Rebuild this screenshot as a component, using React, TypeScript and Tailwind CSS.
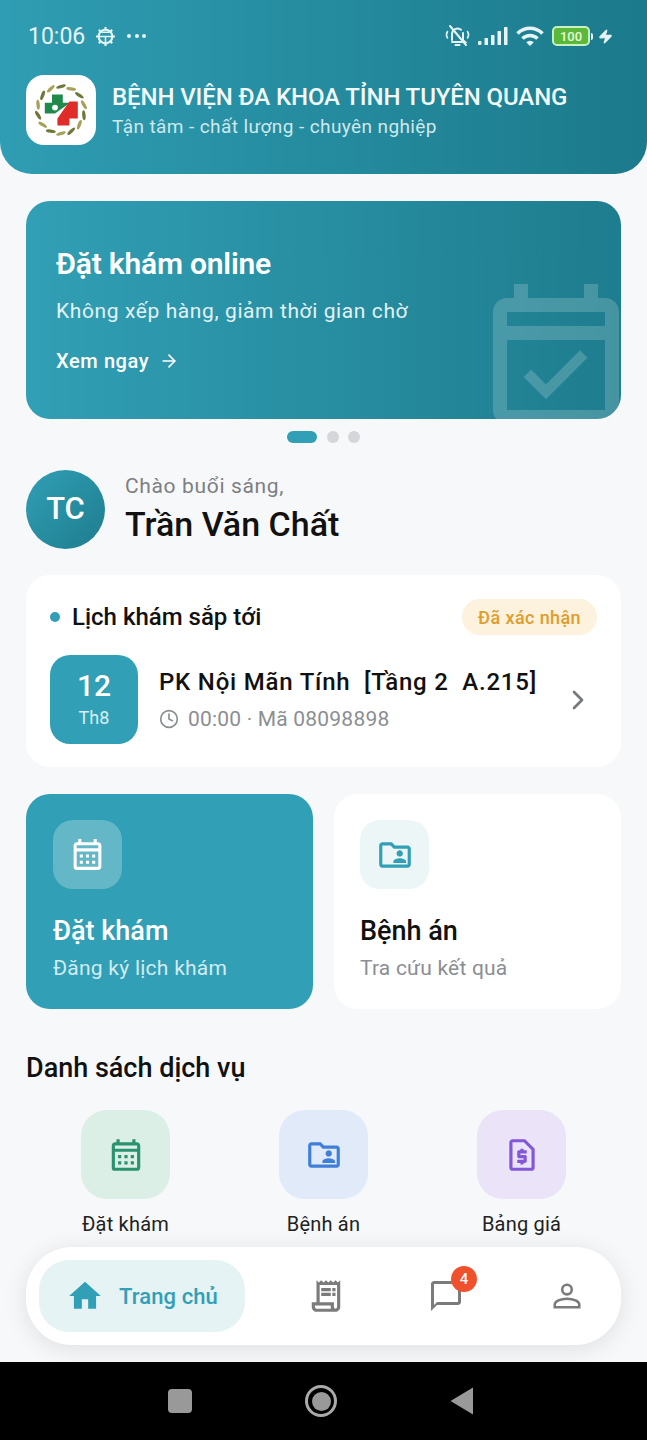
import React from "react";
import { ArrowRight, ChevronRight, Clock, Zap } from "lucide-react";
import {
  MdHome,
  MdOutlineCalendarMonth,
  MdOutlineChatBubbleOutline,
  MdOutlineEventAvailable,
  MdOutlineFolderShared,
  MdOutlineReceiptLong,
  MdOutlineRequestPage,
  MdWifi,
} from "react-icons/md";

const services = [
  { label: "Đặt khám", box: "bg-[#dcefe7]", icon: <MdOutlineCalendarMonth className="text-[38px] text-[#2b9270]" /> },
  { label: "Bệnh án", box: "bg-[#e0eaf9]", icon: <MdOutlineFolderShared className="text-[38px] text-[#3f7fd8]" /> },
  { label: "Bảng giá", box: "bg-[#ebe4f9]", icon: <MdOutlineRequestPage className="text-[38px] text-[#8257d8]" /> },
];

function Gear() {
  return (
    <svg width="21" height="21" viewBox="0 0 20 20" fill="none" stroke="#e6f4f6" strokeWidth="2">
      <circle cx="10" cy="10" r="6.500" />
      <path d="M3.500 10h13M10 10v6.500M6 6l8 0" strokeWidth="1.500" />
      <path d="M10 1v2.500M10 16.500v2.500M1 10h2.500M16.500 10h2.500M3.600 3.600l1.800 1.800M14.600 14.600l1.800 1.800M16.400 3.600l-1.800 1.800M5.400 14.600l-1.800 1.800" />
    </svg>
  );
}

function MutedBell() {
  return (
    <svg width="27" height="26" viewBox="0 0 27 26" fill="none" stroke="#e6f4f6" strokeWidth="2" strokeLinecap="round">
      <path d="M8 17V11a5.500 5.500 0 0 1 9-4.200M19 10v7l2 2H8" />
      <path d="M11.500 22h4" />
      <path d="M6 3l16 19" />
      <path d="M3.500 8.500c-1.300 2-1.300 4.500 0 6.500M23.500 8.500c1.300 2 1.300 4.500 0 6.500" strokeWidth="1.600" />
    </svg>
  );
}

function Signal() {
  return (
    <svg width="30" height="18" viewBox="0 0 30 18" fill="#e6f4f6">
      <rect x="0" y="14" width="3.500" height="4" rx="1" />
      <rect x="6.500" y="11" width="3.500" height="7" rx="0.500" />
      <rect x="13" y="8" width="3.500" height="10" rx="0.500" />
      <rect x="19.500" y="4" width="3.500" height="14" rx="0.500" />
      <rect x="26" y="0" width="3.500" height="18" rx="0.500" />
    </svg>
  );
}

function Battery() {
  return (
    <div className="flex items-center gap-[1px]">
      <div className="flex h-[20px] w-[38px] items-center justify-center rounded-[5px] border-2 border-[#c8f0c0] bg-[#5cb83a] text-[13px] font-medium leading-none text-[#e8ffd8]">
        100
      </div>
      <div className="h-[7px] w-[2px] rounded-r bg-[#e6f4f6]" />
    </div>
  );
}

function HospitalLogo() {
  const leaves = Array.from({ length: 14 }, (_, i) => (i * 360) / 14);
  return (
    <svg width="52" height="56" viewBox="0 0 52 56">
      {leaves.map((a, i) => (
        <ellipse
          key={a}
          cx="26"
          cy="4.500"
          rx="5"
          ry="1.700"
          fill={i % 2 ? "#a8a15a" : "#6f7a3a"}
          transform={`rotate(${a} 26 28) rotate(-18 26 4.500)`}
        />
      ))}
      <g transform="translate(26 28) scale(1.200) translate(-26 -28)">
        <path d="M18.500 15h9v7h6L21 31h-8.500v-9h6z" fill="#1f8a4c" />
        <circle cx="21" cy="26" r="2.400" fill="#fff" />
        <path d="M33 21h7v14h-7v6H23v-6z" fill="#e02b2b" />
      </g>
    </svg>
  );
}

function PersonIcon() {
  return (
    <svg width="32" height="32" viewBox="0 0 30 30" fill="none" stroke="#7b7b7b" strokeWidth="2.400">
      <circle cx="15" cy="9" r="4.500" />
      <path d="M3.500 25.500v-2.500c0-3 5.500-5.500 11.500-5.500s11.500 2.500 11.500 5.500v2.500z" />
    </svg>
  );
}

export default function App() {
  return (
    <div className="relative flex h-[1440px] w-[647px] flex-col overflow-hidden bg-[#f7f8f9] font-['Roboto',sans-serif]">
      <header className="h-[174px] shrink-0 rounded-b-[32px] bg-gradient-to-r from-[#2f9db3] to-[#1b7a8b] px-[26px] pt-[22px]">
        <div className="flex h-[28px] items-center justify-between pl-[2px] pr-[8px]">
          <div className="flex items-center gap-[10px] text-[#e6f4f6]">
            <span className="text-[23px] leading-none">10:06</span>
            <Gear />
            <span className="ml-[1px] flex gap-[3.500px]">
              <i className="h-[4px] w-[4px] rounded-full bg-[#e6f4f6]" />
              <i className="h-[4px] w-[4px] rounded-full bg-[#e6f4f6]" />
              <i className="h-[4px] w-[4px] rounded-full bg-[#e6f4f6]" />
            </span>
          </div>
          <div className="flex items-center gap-[7px] text-[#e6f4f6]">
            <MutedBell />
            <Signal />
            <MdWifi className="text-[30px]" />
            <Battery />
            <Zap size={15} fill="currentColor" className="-ml-[2px]" />
          </div>
        </div>
        <div className="mt-[25px] flex items-center gap-[16px]">
          <div className="flex h-[70px] w-[70px] items-center justify-center rounded-[18px] bg-white">
            <HospitalLogo />
          </div>
          <div>
            <h1 className="text-[24px] font-medium leading-[30px] tracking-[-0.1px] text-[#f2fafb]">
              BỆNH VIỆN ĐA KHOA TỈNH TUYÊN QUANG
            </h1>
            <p className="mt-[3px] text-[19px] leading-[24px] tracking-[0.4px] text-[#cfe8ed]">Tận tâm - chất lượng - chuyên nghiệp</p>
          </div>
        </div>
      </header>

      <main className="flex flex-col px-[26px]">
        <section className="relative mt-[27px] h-[218px] overflow-hidden rounded-[24px] bg-gradient-to-r from-[#319fb5] to-[#1e7d8e] pl-[30px] pt-[44px] text-white">
          <h2 className="text-[30px] font-semibold leading-[38px] tracking-[-0.2px]">Đặt khám online</h2>
          <p className="mt-[14px] text-[21px] leading-[28px] tracking-[0.6px] text-[#e2f2f5]">Không xếp hàng, giảm thời gian chờ</p>
          <div className="mt-[23px] flex items-center gap-[10px] text-[20px] font-medium leading-[26px] tracking-[0.6px]">
            Xem ngay <ArrowRight size={20} />
          </div>
          <MdOutlineEventAvailable className="absolute -right-[19px] -bottom-[26px] text-[168px] text-white/[0.18]" />
        </section>

        <div className="mt-[12px] flex items-center justify-center gap-[9.500px]">
          <span className="h-[12px] w-[30px] rounded-full bg-[#319fb5]" />
          <span className="h-[12px] w-[12px] rounded-full bg-[#d4d6d9]" />
          <span className="h-[12px] w-[12px] rounded-full bg-[#d4d6d9]" />
        </div>

        <div className="mt-[27px] flex items-center gap-[20px]">
          <div className="flex h-[79px] w-[79px] items-center justify-center rounded-full bg-gradient-to-br from-[#319fb5] to-[#1e7d8e] text-[31px] font-medium text-white">
            TC
          </div>
          <div className="-mt-[1px]">
            <p className="text-[21px] leading-[28px] tracking-[0.65px] text-[#7c7f84]">Chào buổi sáng,</p>
            <p className="mt-[2px] text-[34px] font-medium leading-[44px] text-[#111]">Trần Văn Chất</p>
          </div>
        </div>

        <section className="mt-[26px] h-[192px] rounded-[24px] bg-white px-[24px] pt-[24px]">
          <div className="flex h-[36px] items-center justify-between">
            <div className="flex items-center gap-[12px]">
              <span className="h-[10px] w-[10px] rounded-full bg-[#319fb5]" />
              <span className="text-[24px] font-medium text-[#111]">Lịch khám sắp tới</span>
            </div>
            <span className="flex h-[36px] items-center rounded-full bg-[#fdf2dd] px-[16px] text-[18px] font-medium tracking-[0.4px] text-[#e09c2c]">
              Đã xác nhận
            </span>
          </div>
          <div className="mt-[20px] flex items-center">
            <div className="flex h-[89px] w-[88px] shrink-0 flex-col items-center justify-center rounded-[20px] bg-[#319fb5] text-white">
              <span className="-mt-[2px] text-[30px] font-medium leading-[36px]">12</span>
              <span className="mt-[2px] text-[18px] leading-[24px] text-[#d8eff3]">Th8</span>
            </div>
            <div className="ml-[21px] flex-1">
              <p className="whitespace-pre text-[24px] font-medium leading-[30px] tracking-[0.8px] text-[#111]">PK Nội Mãn Tính  [Tầng 2  A.215]</p>
              <div className="mt-[9px] flex items-center gap-[9px] text-[21px] leading-[26px] tracking-[0.2px] text-[#8b8e92]">
                <Clock size={20} />
                00:00 · Mã 08098898
              </div>
            </div>
            <ChevronRight size={32} className="mr-[3px] text-[#75787c]" />
          </div>
        </section>

        <div className="mt-[27px] grid h-[215px] grid-cols-2 gap-[21px]">
          <div className="rounded-[24px] bg-[#319fb5] pl-[27px] pt-[26px]">
            <div className="flex h-[69px] w-[69px] items-center justify-center rounded-[20px] bg-white/25">
              <MdOutlineCalendarMonth className="text-[37px] text-white" />
            </div>
            <p className="mt-[25px] text-[27px] font-medium leading-[34px] text-white">Đặt khám</p>
            <p className="mt-[6px] text-[21px] leading-[28px] tracking-[0.25px] text-[#d3ecf1]">Đăng ký lịch khám</p>
          </div>
          <div className="rounded-[24px] bg-white pl-[26px] pt-[26px]">
            <div className="flex h-[69px] w-[69px] items-center justify-center rounded-[20px] bg-[#ecf6f7]">
              <MdOutlineFolderShared className="text-[38px] text-[#319fb5]" />
            </div>
            <p className="mt-[25px] text-[27px] font-medium leading-[34px] text-[#111]">Bệnh án</p>
            <p className="mt-[6px] text-[21px] leading-[28px] tracking-[0.2px] text-[#8b8e92]">Tra cứu kết quả</p>
          </div>
        </div>

        <h2 className="mt-[42px] text-[27px] font-medium leading-[34px] text-[#111]">Danh sách dịch vụ</h2>

        <div className="mt-[25px] grid grid-cols-[198px_198px_198px] justify-center">
          {services.map((s) => (
            <div key={s.label} className="flex flex-col items-center">
              <div className={`flex h-[89px] w-[89px] items-center justify-center rounded-[26px] ${s.box}`}>{s.icon}</div>
              <span className="mt-[12px] text-[20px] leading-[26px] tracking-[0.2px] text-[#222]">{s.label}</span>
            </div>
          ))}
        </div>
      </main>

      <nav className="absolute left-[26px] top-[1247px] flex h-[98px] w-[595px] items-center rounded-[46px] bg-white pl-[13px] shadow-[0_4px_24px_rgba(0,0,0,0.10)]">
        <div className="flex h-[72px] w-[206px] items-center gap-[15px] rounded-[30px] bg-[#e5f3f5] pl-[27px] text-[#319fb5]">
          <MdHome className="text-[38px]" />
          <span className="text-[22px] font-medium tracking-[0.1px]">Trang chủ</span>
        </div>
        <MdOutlineReceiptLong className="ml-[62px] text-[38px] text-[#7b7b7b]" />
        <div className="relative ml-[83px]">
          <MdOutlineChatBubbleOutline className="text-[36px] text-[#7b7b7b]" />
          <span className="absolute -right-[13px] -top-[12px] flex h-[26px] w-[26px] items-center justify-center rounded-full bg-[#f0512d] text-[15px] font-medium text-white">
            4
          </span>
        </div>
        <div className="ml-[87px]">
          <PersonIcon />
        </div>
      </nav>

      <div className="absolute inset-x-0 bottom-0 flex h-[78px] items-center bg-black">
        <span className="ml-[168px] h-[24px] w-[24px] rounded-[4px] bg-[#999]" />
        <span className="ml-[113px] flex h-[32px] w-[32px] items-center justify-center rounded-full border-[3px] border-[#aaa]">
          <span className="h-[19px] w-[19px] rounded-full bg-[#999]" />
        </span>
        <svg width="24" height="28" viewBox="0 0 24 28" className="ml-[113px]" fill="#999">
          <path d="M23 0.500v27L0.500 14z" />
        </svg>
      </div>
    </div>
  );
}
